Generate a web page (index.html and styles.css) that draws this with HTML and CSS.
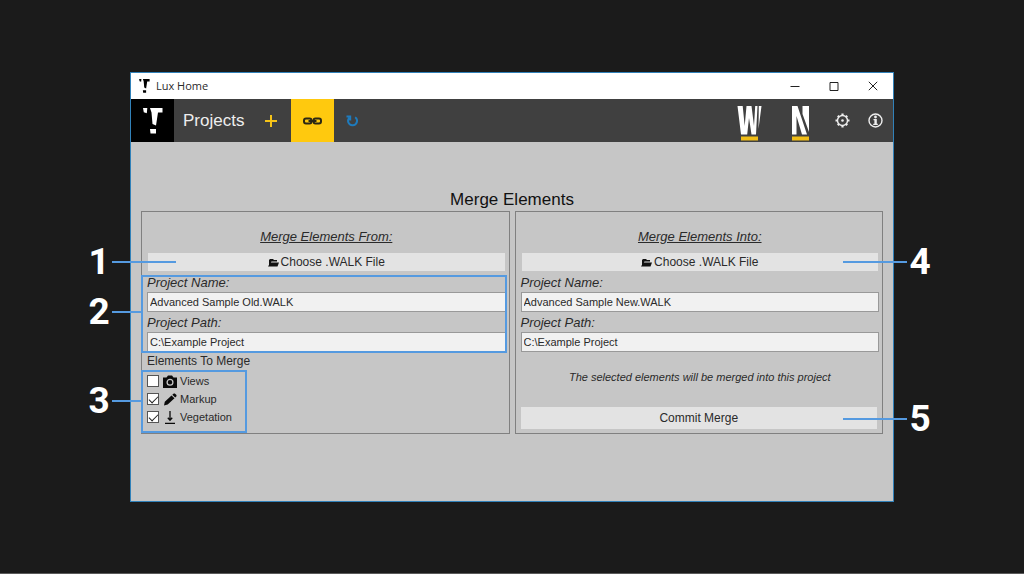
FILE: index.html
```html
<!DOCTYPE html>
<html lang="en">
<head>
<meta charset="utf-8">
<title>Lux Home</title>
<link rel="stylesheet" href="styles.css">
</head>
<body>
<svg class="defs" aria-hidden="true">
  <symbol id="mark" viewBox="0 0 20 26"><path d="M0 0h4.300l-.5 5.200-3-1zM7 0h12.500v4.500h-4.500l-2 13-3.500-1.500-1-11.500zM7 21h6v4.500h-5.500z"/></symbol>
  <symbol id="folder" viewBox="0 0 11 9"><path d="M1 7V2l1-1h3l1 1h3v1.500H3.500zM0 8.500l2.500-4H11l-1.500 4z"/></symbol>
</svg>
<main class="window">
  <header class="titlebar">
    <svg class="titlebar-mark" aria-hidden="true"><use href="#mark"/></svg>
    <span class="titlebar-name">Lux Home</span>
    <button class="win-btn" type="button" aria-label="Minimize"><svg viewBox="0 0 10 10"><path d="M.5 5.500h9"/></svg></button>
    <button class="win-btn" type="button" aria-label="Maximize"><svg viewBox="0 0 10 10"><path d="M1 1.500h8v8H1z"/></svg></button>
    <button class="win-btn" type="button" aria-label="Close"><svg viewBox="0 0 10 10"><path d="M.8.8l8.400 8.400M9.200.8L.8 9.200"/></svg></button>
  </header>
  <nav class="toolbar">
    <a class="brand" href="#" aria-label="Home"><svg aria-hidden="true"><use href="#mark"/></svg></a>
    <span class="toolbar-title">Projects</span>
    <button class="tool tool-add" type="button" aria-label="Add project"><svg viewBox="0 0 12 12"><path d="M6 0v12M0 6h12"/></svg></button>
    <button class="tool tool-merge" type="button" aria-label="Merge"><svg viewBox="0 0 19 8"><rect x="1" y="1.500" width="7.500" height="5" rx="2"/><rect x="10.500" y="1.500" width="7.500" height="5" rx="2"/><path d="M5.500 4h8"/></svg></button>
    <button class="tool tool-refresh" type="button" aria-label="Refresh"><svg viewBox="0 0 12 13"><path d="M9.200 3.200A4.500 4.500 0 1 1 3.200 3.800M.5 2.500h3.700v4"/></svg></button>
    <button class="tool app" type="button" aria-label="Walk"><svg viewBox="0 0 25 36"><path class="fill" d="M.5 1h5.200l2 20 1.800-20h5l2.500 20 1.200-20h2.300l-1.500 28.500h-4.500L12 13l-1.800 16.500H4zM21.800 1h2.700l-3 23z"/><path class="bar" d="M4 31.500h17v4H4z"/></svg></button>
    <button class="tool app" type="button" aria-label="Navigate"><svg viewBox="0 0 25 36"><path class="fill" d="M4 1h5.500l9.500 28.500h-5L8.500 11v18.500H4zM14.500 1H21v26L14.500 9z"/><path class="bar" d="M4 31.500h17v4H4z"/></svg></button>
    <button class="tool util" type="button" aria-label="Settings"><svg viewBox="0 0 15 15"><circle cx="7.500" cy="7.500" r="5"/><circle class="dot" cx="7.500" cy="7.500" r="1.300"/><path class="teeth" d="M7.500.5v2M7.500 12.500v2M.5 7.500h2M12.500 7.500h2M2.800 2.800L4 4M11 11l1.200 1.200M12.200 2.800L11 4M4 11l-1.200 1.200"/></svg></button>
    <button class="tool util" type="button" aria-label="Information"><svg viewBox="0 0 15 15"><circle cx="7.500" cy="7.500" r="6.500"/><circle class="dot" cx="7.500" cy="4" r="1.400"/><path class="dot" d="M5.500 6h3.300v4.800h1V12H5.200v-1.200h1.200v-3.600h-.9z"/></svg></button>
  </nav>
  <section class="content">
    <h1>Merge Elements</h1>
    <div class="panels">
      <section class="panel">
        <h2>Merge Elements From:</h2>
        <button class="choose" type="button"><svg aria-hidden="true"><use href="#folder"/></svg>Choose .WALK File</button>
        <div class="fields">
          <label for="from-name">Project Name:</label>
          <input id="from-name" type="text" value="Advanced Sample Old.WALK">
          <label for="from-path">Project Path:</label>
          <input id="from-path" type="text" value="C:\Example Project">
          <span class="highlight"></span>
        </div>
        <h3>Elements To Merge</h3>
        <div class="options">
          <label><input type="checkbox"><svg viewBox="0 0 14 13"><path d="M0 2.500h3.500L5 .5h4l1.500 2H14V13H0z"/><circle class="lens" cx="7" cy="7.200" r="2.900"/></svg>Views</label>
          <label><input type="checkbox" checked><svg viewBox="0 0 14 13"><path d="M1 12.500l.8-3.800L8.500 2.500l3 2.800-6.800 6.200zM9.300 1.800l1.500-1.300h1L13.500 2v1.200l-1.300 1.400z"/></svg>Markup</label>
          <label><input type="checkbox" checked><svg viewBox="0 0 14 13"><path class="line" d="M7 0v9M4.800 6.800L7 9.300l2.200-2.500M2 12.300h10"/></svg>Vegetation</label>
          <span class="highlight"></span>
        </div>
      </section>
      <section class="panel">
        <h2>Merge Elements Into:</h2>
        <button class="choose" type="button"><svg aria-hidden="true"><use href="#folder"/></svg>Choose .WALK File</button>
        <div class="fields">
          <label for="into-name">Project Name:</label>
          <input id="into-name" type="text" value="Advanced Sample New.WALK">
          <label for="into-path">Project Path:</label>
          <input id="into-path" type="text" value="C:\Example Project">
        </div>
        <p class="note">The selected elements will be merged into this project</p>
        <button class="commit" type="button">Commit Merge</button>
      </section>
    </div>
  </section>
  <div class="callout left row-choose long"><b>1</b><i></i></div>
  <div class="callout left row-fields"><b>2</b><i></i></div>
  <div class="callout left row-options"><b>3</b><i></i></div>
  <div class="callout right row-choose long"><i></i><b>4</b></div>
  <div class="callout right row-commit long"><i></i><b>5</b></div>
</main>
</body>
</html>
```
FILE: styles.css
```css
* { box-sizing: border-box; }
body {
  margin: 0;
  min-height: 100vh;
  padding: 72px 130px 64px;
  background: #1b1b1b;
  border-bottom: 1px solid #5a5a5a;
  font-family: "Liberation Sans", Arial, sans-serif;
  font-size: 12px;
  color: #2a2a2a;
}
.defs { position: absolute; width: 0; height: 0; }
button { border: 0; padding: 0; margin: 0; font: inherit; color: inherit; }
h1, h2, h3, p { margin: 0; font-weight: normal; }

.window { position: relative; border: 1px solid #3181b9; background: #c6c6c6; }

.titlebar { display: flex; align-items: center; height: 26px; padding: 0 1px 0 8px; background: #fff; }
.titlebar-mark { width: 11px; height: 14px; }
.titlebar-name { flex: 1; margin-left: 6px; font: 11px/16px "Open Sans", sans-serif; }
.win-btn { display: grid; place-items: center; width: 39px; height: 24px; background: none; }
.win-btn svg { width: 10px; height: 10px; fill: none; stroke: #222; }

.toolbar { display: flex; align-items: center; height: 43px; padding-right: 1px; background: #404040; }
.brand { display: grid; place-items: center; width: 43px; height: 43px; background: #000; }
.brand svg { width: 20px; height: 26px; fill: #fff; }
.toolbar-title { width: 60px; margin-left: 9px; font-size: 17px; color: #eee; }
.tool { display: grid; place-items: center; height: 43px; background: none; }
.tool svg { fill: none; }
.tool-add { width: 40px; margin-left: 8px; }
.tool-add svg { width: 12px; height: 12px; stroke: #f5c318; stroke-width: 2; }
.tool-merge { width: 43px; background: #ffc90e; }
.tool-merge svg { width: 19px; height: 8px; stroke: #2c2814; stroke-width: 2; }
.tool-refresh { width: 36px; }
.tool-refresh svg { width: 12px; height: 13px; stroke: #1e7bbd; stroke-width: 2; }
.app { width: 51px; padding-top: 4px; }
.tool-refresh + .app { margin-left: auto; }
.app svg { width: 25px; height: 36px; }
.app .fill { fill: #fff; }
.app .bar { fill: #f0bd16; }
.util { width: 33px; }
.util svg { width: 15px; height: 15px; stroke: #eee; stroke-width: 1.400; }
.util .teeth { stroke-width: 2.200; }
.util .dot { fill: #eee; stroke: none; }

.content { padding: 47px 10px 67px; }
h1 { font-size: 17px; line-height: 22px; text-align: center; color: #111; }
.panels { display: grid; grid-template-columns: 1fr 1fr; gap: 5px; }
.panel { display: flex; flex-direction: column; padding: 16px 3px 0 5px; border: 1px solid #808080; }
h2 { margin-bottom: 7px; font-size: 13px; line-height: 18px; font-style: italic; text-align: center; text-decoration: underline; }
.choose { display: flex; align-items: center; justify-content: center; gap: 2px; height: 18px; margin: 0 1px; background: #e3e3e3; }
.choose svg { width: 11px; height: 9px; fill: #111; }
.fields { position: relative; display: flex; flex-direction: column; padding-top: 3px; }
.fields label { font-size: 13px; line-height: 18px; font-style: italic; }
.fields input { width: 100%; height: 20px; margin-bottom: 2px; padding: 0 2px; border: 1px solid #999; background: #f1f1f1; font: inherit; font-size: 11px; color: #2a2a2a; }
.highlight { position: absolute; border: 2px solid #559ae0; pointer-events: none; }
.fields .highlight { inset: 4px -1px 1px -6px; }
h3 { font-size: 12px; line-height: 15px; }
.options { position: relative; align-self: flex-start; padding: 3px 15px 7px 0; }
.options label { display: flex; align-items: center; height: 18px; font-size: 11px; }
.options input { appearance: none; width: 12px; height: 12px; margin: 0; border: 1px solid #555; background: #fff; }
.options input:checked::before { content: ""; display: block; width: 8px; height: 4px; margin: 2px 1px; border: solid #222; border-width: 0 0 1px 1px; rotate: -45deg; }
.options svg { width: 14px; height: 13px; margin: 0 3px 0 4px; fill: #0a0a0a; }
.options .lens { stroke: #c6c6c6; stroke-width: 1.300; }
.options .line { fill: none; stroke: #0a0a0a; stroke-width: 1.300; }
.options .highlight { inset: 1px 0 0 -6px; }
.note { margin-top: 14px; font-size: 11px; line-height: 18px; font-style: italic; text-align: center; }
.commit { height: 22px; margin: auto 2px 4px 0; background: #e3e3e3; }

.callout { position: absolute; display: flex; align-items: center; gap: 1px; height: 36px; }
.callout b { width: 24px; font: bold 37px/36px Roboto, sans-serif; color: #fff; text-align: center; }
.callout i { width: 31px; height: 2px; background: #559ae0; }
.callout.long i { width: 64px; }
.left { left: -44px; }
.right { right: -39px; }
.row-choose { top: 171px; }
.row-fields { top: 221px; }
.row-options { top: 310px; }
.row-commit { top: 328px; }
```
